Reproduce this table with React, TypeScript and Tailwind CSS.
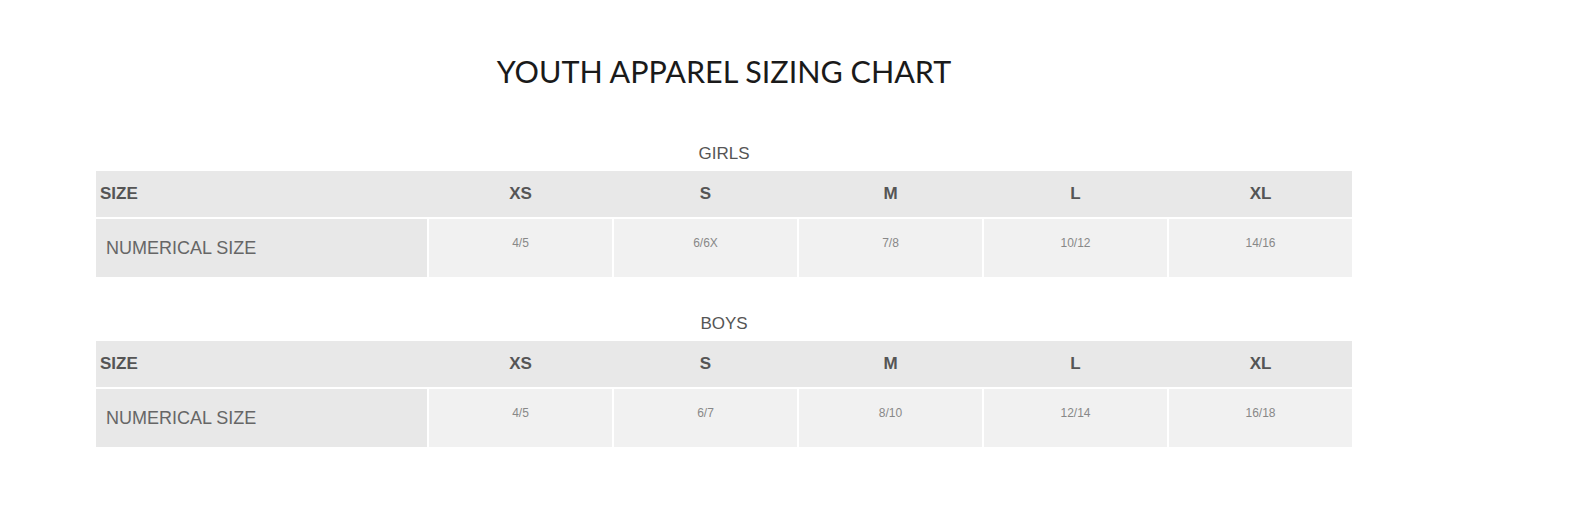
const girls = ['4/5', '6/6X', '7/8', '10/12', '14/16']
const boys = ['4/5', '6/7', '8/10', '12/14', '16/18']
const sizes = ['XS', 'S', 'M', 'L', 'XL']

function SizeTable({ label, values }: { label: string; values: string[] }) {
    return (
        <div>
            <h3 className="text-center text-[17px] leading-[20px] text-[#555] uppercase">{label}</h3>
            <div className="mt-[7px]">
                <div className="grid grid-cols-[331px_repeat(5,1fr)] gap-x-[2px] bg-[#e8e8e8] h-[46px] items-center">
                    <div className="pl-[4px] font-bold text-[17px] text-[#555]">SIZE</div>
                    {sizes.map((s) => (
                        <div key={s} className="text-center font-bold text-[17px] text-[#555]">{s}</div>
                    ))}
                </div>
                <div className="grid grid-cols-[331px_repeat(5,1fr)] gap-x-[2px] mt-[2px] h-[58px]">
                    <div className="bg-[#e8e8e8] flex items-center pl-[10px] text-[18px] text-[#666]">NUMERICAL SIZE</div>
                    {values.map((v, i) => (
                        <div key={i} className="bg-[#f1f1f1] text-center pt-[15px] text-[12px] text-[#888]">{v}</div>
                    ))}
                </div>
            </div>
        </div>
    )
}

export default function App() {
    return (
        <div className="bg-white w-[1583px] h-[514px]" style={{ fontFamily: '"Liberation Sans", Arial, sans-serif' }}>
            <div className="ml-[96px] w-[1256px] pt-[49px]">
                <h1 className="text-center text-[30.5px] leading-[44px] text-[#1a1a1a] font-['Lato',sans-serif]">
                    YOUTH APPAREL SIZING CHART
                </h1>
                <div className="mt-[51px]">
                    <SizeTable label="Girls" values={girls} />
                </div>
                <div className="mt-[37px]">
                    <SizeTable label="Boys" values={boys} />
                </div>
            </div>
        </div>
    )
}
